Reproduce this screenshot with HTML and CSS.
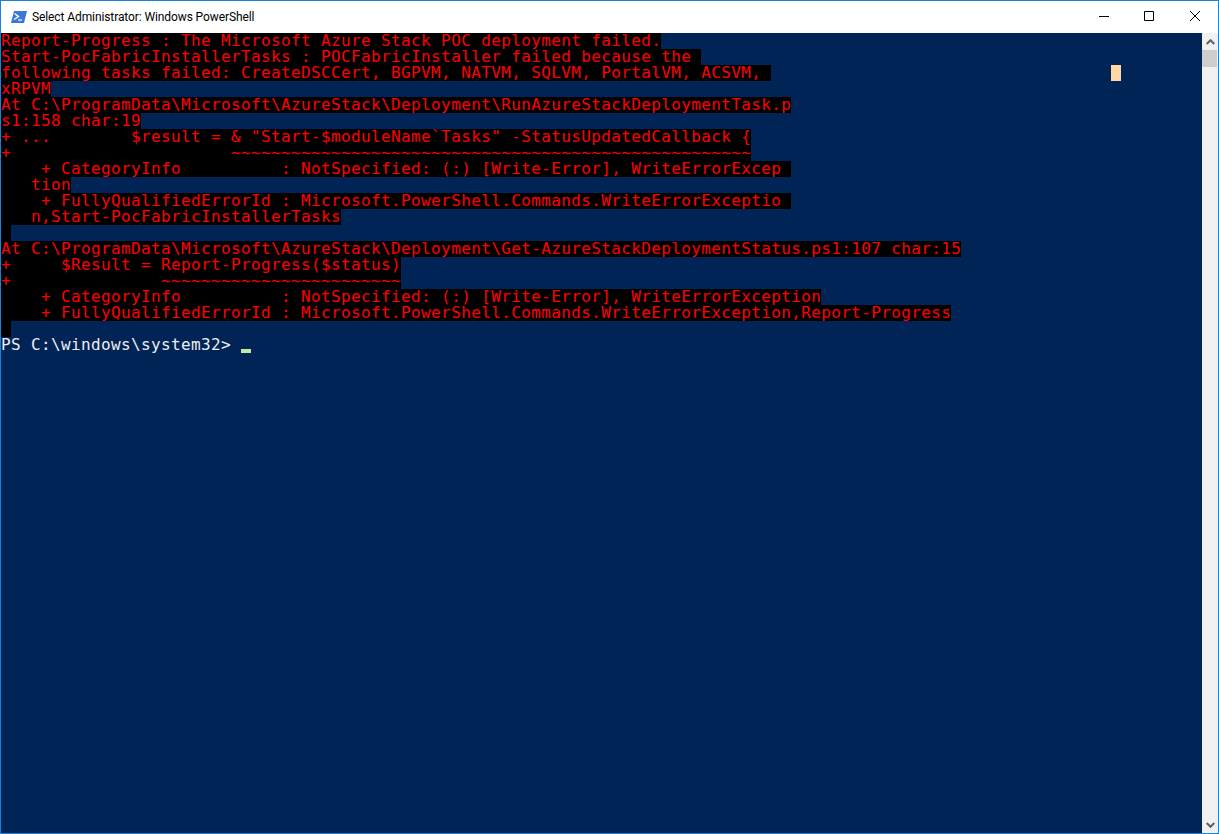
FILE: index.html
```html
<!DOCTYPE html>
<html lang="en">
<head>
<meta charset="utf-8">
<title>Select Administrator: Windows PowerShell</title>
<link rel="stylesheet" href="styles.css">
</head>
<body>
<div class="window">
  <header class="titlebar">
    <svg class="app-icon" width="16" height="12" viewBox="0 0 16 12" aria-hidden="true">
      <path d="M3 0H16L13 12H0Z" fill="#3a78d4"/>
      <path d="M3.5 2.5L7.5 5.5L3 8.5" fill="none" stroke="#fff" stroke-width="1.4"/>
      <path d="M7 9H11" stroke="#fff" stroke-width="1.2"/>
    </svg>
    <span class="title">Select Administrator: Windows PowerShell</span>
    <div class="controls">
      <span class="control"><svg width="10" height="10" viewBox="0 0 10 10"><path d="M0 5.5H10" stroke="#000"/></svg></span>
      <span class="control"><svg width="10" height="10" viewBox="0 0 10 10"><path d="M.5.5H9.5V9.5H.5Z" fill="none" stroke="#000"/></svg></span>
      <span class="control"><svg width="10" height="10" viewBox="0 0 10 10"><path d="M0 0L10 10M10 0L0 10" stroke="#000"/></svg></span>
    </div>
  </header>
  <div class="client">
    <main class="console">
      <div class="line"><span class="err">Report-Progress : The Microsoft Azure Stack POC deployment failed.</span></div>
      <div class="line"><span class="err">Start-PocFabricInstallerTasks : POCFabricInstaller failed because the </span></div>
      <div class="line"><span class="err">following tasks failed: CreateDSCCert, BGPVM, NATVM, SQLVM, PortalVM, ACSVM, </span></div>
      <div class="line"><span class="err">xRPVM</span></div>
      <div class="line"><span class="err">At C:\ProgramData\Microsoft\AzureStack\Deployment\RunAzureStackDeploymentTask.p</span></div>
      <div class="line"><span class="err">s1:158 char:19</span></div>
      <div class="line"><span class="err">+ ...        $result = &amp; "Start-$moduleName`Tasks" -StatusUpdatedCallback {</span></div>
      <div class="line"><span class="err">+                      ~~~~~~~~~~~~~~~~~~~~~~~~~~~~~~~~~~~~~~~~~~~~~~~~~~~~</span></div>
      <div class="line"><span class="err">    + CategoryInfo          : NotSpecified: (:) [Write-Error], WriteErrorExcep </span></div>
      <div class="line"><span class="err">   tion</span></div>
      <div class="line"><span class="err">    + FullyQualifiedErrorId : Microsoft.PowerShell.Commands.WriteErrorExceptio </span></div>
      <div class="line"><span class="err">   n,Start-PocFabricInstallerTasks</span></div>
      <div class="line"><span class="err"> </span></div>
      <div class="line"><span class="err">At C:\ProgramData\Microsoft\AzureStack\Deployment\Get-AzureStackDeploymentStatus.ps1:107 char:15</span></div>
      <div class="line"><span class="err">+     $Result = Report-Progress($status)</span></div>
      <div class="line"><span class="err">+               ~~~~~~~~~~~~~~~~~~~~~~~~</span></div>
      <div class="line"><span class="err">    + CategoryInfo          : NotSpecified: (:) [Write-Error], WriteErrorException</span></div>
      <div class="line"><span class="err">    + FullyQualifiedErrorId : Microsoft.PowerShell.Commands.WriteErrorException,Report-Progress</span></div>
      <div class="line"><span class="err"> </span></div>
      <div class="line prompt"><span>PS C:\windows\system32&gt; </span><span class="cursor"></span></div>
      <span class="selection"></span>
    </main>
    <aside class="scrollbar">
      <span class="arrow"><svg width="9" height="6" viewBox="0 0 9 6"><path d="M.7 5L4.5 1.2L8.3 5" fill="none" stroke="#606060" stroke-width="2"/></svg></span>
      <span class="thumb"></span>
      <span class="track"></span>
      <span class="arrow"><svg width="9" height="6" viewBox="0 0 9 6"><path d="M.7 1L4.5 4.8L8.3 1" fill="none" stroke="#606060" stroke-width="2"/></svg></span>
    </aside>
  </div>
</div>
</body>
</html>
```
FILE: styles.css
```css
* { box-sizing: border-box; }
html, body { margin: 0; height: 100%; overflow: hidden; }
.window {
  width: 1219px;
  height: 834px;
  border: 1px solid #1883d7;
  display: flex;
  flex-direction: column;
  background: #fff;
}
.titlebar {
  height: 32px;
  flex: none;
  display: flex;
  align-items: center;
  padding-left: 10px;
  background: #fff;
}
.app-icon { flex: none; margin-right: 5px; margin-top: -1px; }
.title {
  font: 12px Roboto, sans-serif;
  letter-spacing: -0.1px;
  color: #000;
}
.controls { margin-left: auto; display: flex; height: 100%; }
.control {
  width: 46px;
  display: flex;
  align-items: center;
  justify-content: center;
  padding-bottom: 2px;
}
.control:first-child { padding-left: 2px; }
.client { flex: 1; display: flex; min-height: 0; }
.console {
  position: relative;
  flex: 1;
  background: #012456;
  font-family: "DejaVu Sans Mono", monospace;
  font-size: 16px;
  letter-spacing: 0.37px;
  color: #ff0000;
}
.line { height: 16px; line-height: 16px; white-space: pre; }
.err { background: #000; display: inline-block; height: 16px; vertical-align: top; }
.prompt { color: #eeedf0; display: flex; align-items: flex-end; }
.cursor {
  flex: none;
  width: 10px;
  height: 4px;
  background: #c5e6a5;
}
.selection {
  position: absolute;
  left: 1110px;
  top: 32px;
  width: 10px;
  height: 16px;
  background: #ffd8a4;
}
.scrollbar {
  width: 16px;
  flex: none;
  display: flex;
  flex-direction: column;
  background: #f0f0f0;
}
.arrow { height: 17px; display: flex; align-items: center; justify-content: center; flex: none; }
.thumb { height: 17px; flex: none; background: #cdcdcd; width: 15px; }
.track { flex: 1; }
```
